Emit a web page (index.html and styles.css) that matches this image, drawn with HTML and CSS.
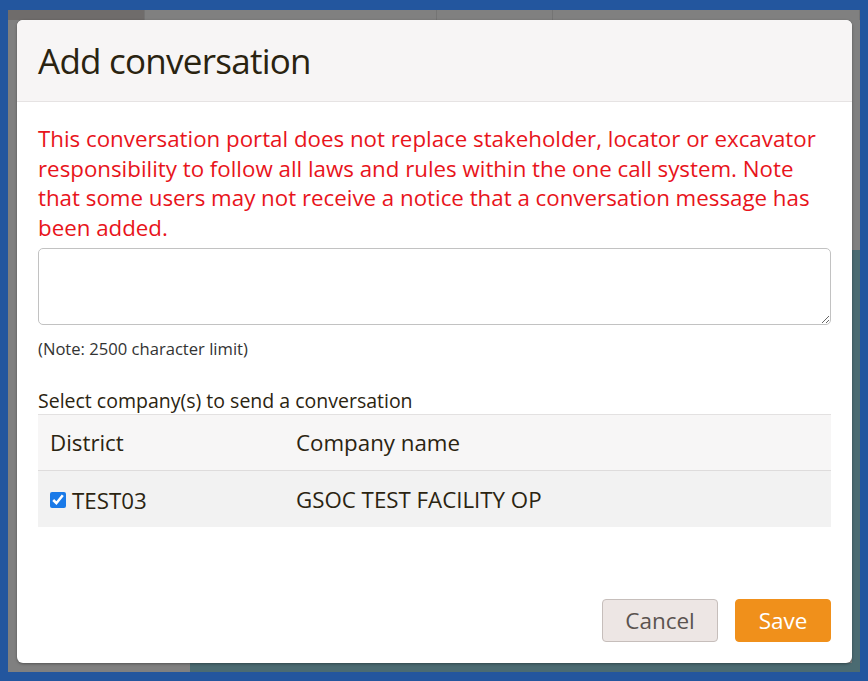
FILE: index.html
```html
<!DOCTYPE html>
<html lang="en">
<head>
<meta charset="utf-8">
<title>Add conversation</title>
<link rel="stylesheet" href="styles.css">
</head>
<body>
<div class="screen">
  <div class="backdrop">
    <div class="page-strip">
      <span class="cell c1"></span>
      <span class="cell c2"></span>
      <span class="cell c3"></span>
      <span class="cell c4"></span>
    </div>
    <div class="modal" role="dialog" aria-labelledby="dlg-title">
      <header class="modal-header">
        <h1 id="dlg-title" class="modal-title">Add conversation</h1>
      </header>
      <div class="modal-body">
        <p class="warning">This conversation portal does not replace stakeholder, locator or excavator responsibility to follow all laws and rules within the one call system. Note that some users may not receive a notice that a conversation message has been added.</p>
        <textarea class="message" aria-label="Message"></textarea>
        <p class="note">(Note: 2500 character limit)</p>
        <p class="select-label">Select company(s) to send a conversation</p>
        <table class="companies">
          <thead>
            <tr><th class="col-district">District</th><th>Company name</th></tr>
          </thead>
          <tbody>
            <tr>
              <td class="col-district"><label class="check"><input type="checkbox" checked> TEST03</label></td>
              <td>GSOC TEST FACILITY OP</td>
            </tr>
          </tbody>
        </table>
      </div>
      <footer class="modal-footer">
        <button class="btn btn-cancel" type="button">Cancel</button>
        <button class="btn btn-save" type="button">Save</button>
      </footer>
    </div>
  </div>
</div>
</body>
</html>
```
FILE: styles.css
```css
* { box-sizing: border-box; }

html, body {
  margin: 0;
  height: 100%;
}

body {
  background: #23569e;
  font-family: "Open Sans", "Noto Sans", sans-serif;
  color: #2b2411;
}

.screen {
  height: 681px;
  padding: 10px 8px 9px 8px;
}

/* dimmed page behind the dialog */
.backdrop {
  position: relative;
  height: 100%;
  padding: 10px 8px 9px 9px;
  background:
    linear-gradient(#4b6b72, #4b6b72) 182px 100% / 100% 9px no-repeat,
    linear-gradient(#4b6b72, #4b6b72) 100% 240px / 8px 100% no-repeat,
    #808080;
}

.page-strip {
  position: absolute;
  left: 0;
  right: 0;
  top: 0;
  height: 10px;
  display: flex;
}

.cell { display: block; height: 10px; border-right: 1px solid #747474; }
.c1 { width: 137px; background: #6f6c6b; }
.c2 { width: 292px; }
.c3 { width: 116px; }
.c4 { flex: 1; }

.modal {
  position: relative;
  height: 100%;
  background: #fff;
  border-radius: 6px;
  box-shadow: 0 1px 3px rgba(0, 0, 0, 0.35);
  display: flex;
  flex-direction: column;
  overflow: hidden;
}

.modal-header {
  height: 82px;
  background: #f7f5f5;
  border-bottom: 1px solid #e6e3e3;
  padding: 0 21px;
  display: flex;
  align-items: center;
}

.modal-title {
  margin: 0;
  font-size: 35px;
  font-weight: 400;
  letter-spacing: -0.75px;
  color: #2a2310;
}

.modal-body {
  flex: 1;
  padding: 22px 21px 0 21px;
}

.warning {
  margin: 0;
  color: #e8141b;
  font-size: 22.3px;
  line-height: 29.5px;
}

.message {
  display: block;
  width: 100%;
  height: 77px;
  margin-top: 6px;
  border: 1px solid #c2c2c2;
  border-radius: 5px;
  resize: vertical;
  font-family: inherit;
}

.note {
  margin: 12px 0 0;
  font-size: 16.6px;
  color: #333;
}

.select-label {
  margin: 28px 0 0;
  font-size: 19.5px;
  line-height: 26px;
  color: #2b2411;
}

.companies {
  width: 100%;
  border-collapse: collapse;
  font-size: 22.3px;
  color: #2b2411;
}

.companies th {
  text-align: left;
  font-weight: 400;
  height: 56px;
  background: #f7f6f6;
  border-top: 1px solid #e3e1e1;
  border-bottom: 1px solid #dedcdc;
  padding: 0 12px;
}

.companies td {
  height: 56px;
  background: #f2f2f2;
  padding: 2px 12px 0;
}

.companies .col-district { width: 246px; }

.check {
  display: inline-flex;
  align-items: center;
  gap: 6px;
}

.check input {
  margin: 0;
  width: 16px;
  height: 16px;
  accent-color: #1a7ae8;
}

.modal-footer {
  display: flex;
  justify-content: flex-end;
  gap: 17px;
  padding: 0 21px 21px;
}

.btn {
  height: 43px;
  border-radius: 4px;
  font-family: inherit;
  font-size: 22.5px;
  padding: 0;
  cursor: pointer;
}

.btn-cancel {
  width: 116px;
  background: #ede6e4;
  border: 1px solid #c6bebb;
  color: #5b534f;
}

.btn-save {
  width: 96px;
  background: #f0901b;
  border: 1px solid #f0901b;
  color: #fff;
}
```
